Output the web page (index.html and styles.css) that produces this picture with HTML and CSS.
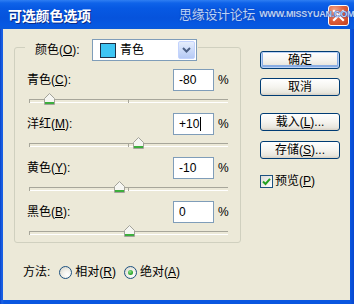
FILE: index.html
```html
<!DOCTYPE html>
<html lang="zh-CN">
<head>
<meta charset="utf-8">
<title>可选颜色选项</title>
<link rel="stylesheet" href="styles.css">
</head>
<body>
<div class="window">
  <div class="titlebar">
    <span class="title">可选颜色选项</span>
    <button class="close" aria-label="关闭">
      <svg width="13" height="13" viewBox="0 0 13 13"><path d="M2 2 L11 11 M11 2 L2 11" stroke="#fff" stroke-width="2.2" stroke-linecap="square"/></svg>
    </button>
    <div class="watermark"><span class="wm-cn">思缘设计论坛</span><span class="wm-en">WWW.MISSYUAN.COM</span></div>
  </div>
  <div class="client">
    <div class="main">
      <div class="group">
        <div class="group-head">
          <span class="lbl head-lbl">颜色(<u>O</u>):</span>
          <div class="select">
            <span class="swatch"></span>
            <span class="sel-text">青色</span>
            <span class="sel-btn"><svg width="9" height="6" viewBox="0 0 9 6"><path d="M1 1 L4.5 4.5 L8 1" fill="none" stroke="#4D6185" stroke-width="2"/></svg></span>
          </div>
        </div>

        <div class="channel">
          <div class="row"><span class="lbl">青色(<u>C</u>):</span><span class="input">-80</span><span class="pct">%</span></div>
          <div class="slider"><span class="thumb" style="left:10%"><svg width="11" height="12" viewBox="0 0 11 12"><path d="M0.5 5.5 L5.5 0.5 L10.5 5.5 V11.5 H0.5 Z" fill="#F6F6F2" stroke="#A3A39A"/><rect x="1" y="9" width="9" height="2" fill="#3DAE3D"/></svg></span></div>
        </div>
        <div class="channel">
          <div class="row"><span class="lbl">洋红(<u>M</u>):</span><span class="input">+10<i class="caret"></i></span><span class="pct">%</span></div>
          <div class="slider"><span class="thumb" style="left:55%"><svg width="11" height="12" viewBox="0 0 11 12"><path d="M0.5 5.5 L5.5 0.5 L10.5 5.5 V11.5 H0.5 Z" fill="#F6F6F2" stroke="#A3A39A"/><rect x="1" y="9" width="9" height="2" fill="#3DAE3D"/></svg></span></div>
        </div>
        <div class="channel">
          <div class="row"><span class="lbl">黄色(<u>Y</u>):</span><span class="input">-10</span><span class="pct">%</span></div>
          <div class="slider"><span class="thumb" style="left:45%"><svg width="11" height="12" viewBox="0 0 11 12"><path d="M0.5 5.5 L5.5 0.5 L10.5 5.5 V11.5 H0.5 Z" fill="#F6F6F2" stroke="#A3A39A"/><rect x="1" y="9" width="9" height="2" fill="#3DAE3D"/></svg></span></div>
        </div>
        <div class="channel">
          <div class="row"><span class="lbl">黑色(<u>B</u>):</span><span class="input">0</span><span class="pct">%</span></div>
          <div class="slider"><span class="thumb" style="left:50%"><svg width="11" height="12" viewBox="0 0 11 12"><path d="M0.5 5.5 L5.5 0.5 L10.5 5.5 V11.5 H0.5 Z" fill="#F6F6F2" stroke="#A3A39A"/><rect x="1" y="9" width="9" height="2" fill="#3DAE3D"/></svg></span></div>
        </div>
      </div>

      <div class="side">
        <button class="btn default">确定</button>
        <button class="btn b-cancel">取消</button>
        <button class="btn b-load">载入(<u>L</u>)...</button>
        <button class="btn b-save">存储(<u>S</u>)...</button>
        <label class="check">
          <span class="box"><svg width="9" height="9" viewBox="0 0 9 9"><path d="M1 4.5 L3.5 7 L8 1.8" fill="none" stroke="#21A121" stroke-width="2"/></svg></span>
          <span>预览(<u>P</u>)</span>
        </label>
      </div>
    </div>

    <div class="method">
      <span class="m-lbl">方法:</span>
      <span class="opt"><span class="radio"></span><span>相对(<u>R</u>)</span></span>
      <span class="opt"><span class="radio on"></span><span>绝对(<u>A</u>)</span></span>
    </div>
  </div>
</div>
</body>
</html>
```

FILE: styles.css
```css
* { box-sizing: border-box; }

body {
  margin: 0;
  font-family: "Liberation Sans", "Noto Sans CJK SC", sans-serif;
  font-size: 12px;
  color: #000;
}

.window {
  width: 354px;
  height: 304px;
  display: flex;
  flex-direction: column;
  background: linear-gradient(90deg, #0843C8 0px, #1C62E6 2px, #0A57E0 4px, #0A57E0 350px, #0847CF 354px);
  position: relative;
  overflow: hidden;
}

.titlebar {
  height: 29px;
  display: flex;
  align-items: center;
  padding-left: 8px;
  background: linear-gradient(180deg, #2F7EF2 0px, #0F63E9 3px, #0759E3 8px, #0653DC 18px, #0658E2 25px, #0A5ADB 29px);
  position: relative;
}

.title {
  color: #fff;
  font-family: "Noto Sans CJK SC", sans-serif;
  font-weight: bold;
  font-size: 14px;
  line-height: 16px;
  letter-spacing: -0.2px;
  text-shadow: 1px 1px 0 #0B2C86;
}

.close {
  margin-left: auto;
  margin-right: 5px;
  margin-top: 1px;
  width: 21px;
  height: 21px;
  padding: 0;
  border: 1px solid #fff;
  border-radius: 3px;
  background: radial-gradient(circle at 30% 25%, #F0A78C 0%, #E0623F 45%, #C6401B 100%);
  display: flex;
  align-items: center;
  justify-content: center;
}

.watermark {
  position: absolute;
  left: 179px;
  top: 6px;
  display: flex;
  align-items: center;
  gap: 4px;
  white-space: nowrap;
  color: #B7D3FA;
  text-shadow: 0 0 1px #1A3FA8, 0 0 1px #1A3FA8;
  pointer-events: none;
}

.wm-cn {
  font-family: "Noto Sans CJK SC", sans-serif;
  font-size: 13px;
  line-height: 16px;
  letter-spacing: -0.3px;
}

.wm-en {
  font-family: "Liberation Sans", sans-serif;
  font-weight: bold;
  font-size: 9px;
  line-height: 16px;
  letter-spacing: -0.2px;
}

.client {
  flex: 1;
  margin: 0 4px 4px 3px;
  background: #ECE9D8;
  padding: 18px 0 0 11px;
  display: flex;
  flex-direction: column;
}

.main {
  display: flex;
  align-items: flex-start;
}

.group {
  width: 227px;
  border: 1px solid #D0D0BF;
  border-radius: 3px;
  padding: 0 12px 0 12px;
}

.group-head {
  display: flex;
  align-items: center;
  width: 173px;
  margin: -9px 0 0 -2px;
  padding: 0 1px 0 10px;
  background: #ECE9D8;
}

.lbl {
  font-family: "Liberation Sans", "Noto Sans CJK SC", sans-serif;
  font-size: 12px;
  line-height: 14px;
  white-space: nowrap;
}

.head-lbl { flex: 1; }

u { text-decoration: underline; text-underline-offset: 1px; }

.select {
  width: 105px;
  height: 22px;
  border: 1px solid #7F9DB9;
  background: #fff;
  display: flex;
  align-items: center;
  padding: 0 1px 0 7px;
}

.swatch {
  width: 16px;
  height: 15px;
  border: 1px solid #1E3046;
  background: #3EC5F3;
}

.sel-text {
  margin-left: 4px;
  flex: 1;
  line-height: 14px;
}

.sel-btn {
  width: 17px;
  height: 18px;
  border: 1px solid #C3D3FD;
  border-radius: 2px;
  background: linear-gradient(180deg, #E6EEFC 0%, #C8D8F8 60%, #B6CAF5 100%);
  display: flex;
  align-items: center;
  justify-content: center;
}

.row {
  display: flex;
  align-items: center;
  height: 22px;
  margin-top: 8px;
}

.row .lbl { flex: 1; }

.input {
  width: 41px;
  height: 22px;
  border: 1px solid #7F9DB9;
  background: #fff;
  padding-left: 5px;
  display: flex;
  align-items: center;
  line-height: 14px;
}

.caret {
  display: inline-block;
  width: 1px;
  height: 14px;
  background: #000;
  margin-left: 1px;
}

.pct {
  width: 10px;
  margin-left: 4px;
  line-height: 14px;
}

.slider {
  position: relative;
  height: 12px;
  margin: 2px 0 0 2px;
}

.slider::before {
  content: "";
  position: absolute;
  left: 0;
  right: 0;
  top: 6px;
  height: 2px;
  border-top: 1px solid #A7A69A;
  border-bottom: 1px solid #FFFFFF;
}

.slider::after {
  content: "";
  position: absolute;
  left: 0;
  right: 0;
  top: 6px;
  height: 4px;
  background:
    linear-gradient(#A7A69A, #A7A69A) 0 0 / 1px 4px no-repeat,
    linear-gradient(#A7A69A, #A7A69A) 50% 0 / 1px 4px no-repeat;
}

.thumb {
  position: absolute;
  top: 0;
  margin-left: -5px;
  width: 11px;
  height: 12px;
  z-index: 1;
  display: block;
}

.thumb svg { display: block; }

.channel:last-child .slider { margin-bottom: 5px; }

.side {
  margin-left: 19px;
  padding-top: 4px;
  display: flex;
  flex-direction: column;
  align-items: flex-start;
}

.btn {
  width: 80px;
  height: 18px;
  padding: 0;
  border: 1px solid #003C74;
  border-radius: 3px;
  background: linear-gradient(180deg, #FFFFFF 0%, #F5F4EF 50%, #E8E6DD 85%, #D6D0C5 100%);
  font-family: "Liberation Sans", "Noto Sans CJK SC", sans-serif;
  font-size: 12px;
  line-height: 14px;
  color: #000;
}

.btn.default {
  box-shadow: inset 0 0 0 1px #BCD3F5, inset 0 -1px 0 2px #89ADE4;
}

.b-cancel { margin-top: 9px; }
.b-load { margin-top: 17px; }
.b-save { margin-top: 10px; }

.check {
  margin-top: 15px;
  display: flex;
  align-items: center;
  line-height: 14px;
}

.box {
  width: 13px;
  height: 13px;
  border: 1px solid #1C5180;
  background: linear-gradient(135deg, #DCDCD7 0%, #FFFFFF 100%);
  display: flex;
  align-items: center;
  justify-content: center;
  margin-right: 2px;
}

.box svg { display: block; }

.method {
  margin: 22px 0 0 9px;
  display: flex;
  align-items: center;
  line-height: 14px;
}

.m-lbl { margin-right: 9px; }

.opt {
  display: flex;
  align-items: center;
}

.opt + .opt { margin-left: 8px; }

.radio {
  width: 13px;
  height: 13px;
  border-radius: 50%;
  border: 1px solid #1C5180;
  background: radial-gradient(circle at 65% 70%, #FFFFFF 0%, #F2F1EB 40%, #D4D2C6 100%);
  margin-right: 3px;
  position: relative;
}

.radio.on::after {
  content: "";
  position: absolute;
  left: 3px;
  top: 3px;
  width: 5px;
  height: 5px;
  border-radius: 50%;
  background: radial-gradient(circle at 40% 35%, #8FE28F 0%, #2FA82F 60%, #1B8A1B 100%);
}
```
